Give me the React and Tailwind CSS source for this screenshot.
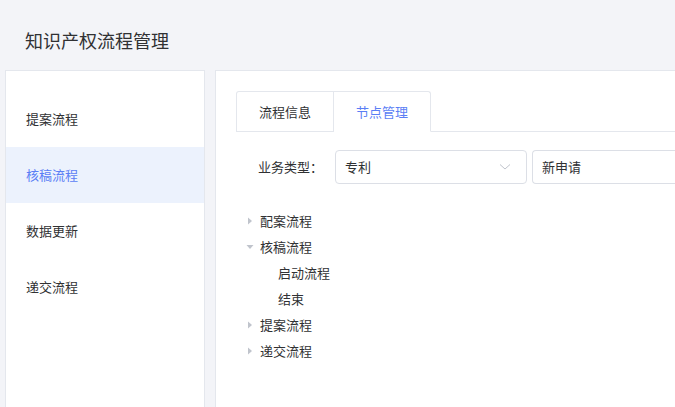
const font = { fontFamily: '"Microsoft YaHei", "Noto Sans CJK SC", sans-serif' };

const menu = ["提案流程", "核稿流程", "数据更新", "递交流程"];

const Caret = ({ open }) => (
  <svg width="8" height="8" viewBox="0 0 8 8" className="shrink-0">
    {open ? <path d="M0.5 2 L7.5 2 L4 6 Z" fill="#c0c4cc" /> : <path d="M2 0.5 L6 4 L2 7.5 Z" fill="#c0c4cc" />}
  </svg>
);

const TreeRow = ({ label, open, child }) => (
  <div className={`flex items-center h-[26px] ${child ? "pl-[42px]" : "pl-[10px]"}`}>
    {!child && <Caret open={open} />}
    <span className={child ? "" : "ml-[6px]"}>{label}</span>
  </div>
);

export default function App() {
  return (
    <div className="w-[675px] h-[407px] overflow-hidden bg-[#f3f4f8] text-[13px] text-[#303133]" style={font}>
      <div className="h-[70px] pl-[25px] pt-[28px] text-[18px] leading-[24px] text-[#303133]">知识产权流程管理</div>
      <div className="flex gap-[10px] pl-[5px]">
        <div className="w-[200px] h-[360px] shrink-0 bg-white border border-[#e4e7ed] pt-[20px]">
          {menu.map((m, i) => (
            <div key={m} className={`h-[56px] flex items-center pl-[20px] ${i === 1 ? "bg-[#ecf2fd] text-[#5b7ef5]" : ""}`}>
              {m}
            </div>
          ))}
        </div>
        <div className="flex-1 h-[360px] bg-white border border-[#e4e7ed] border-r-0 pt-[20px] pl-[20px]">
          <div className="flex border-b border-[#e4e7ed] h-[41px]">
            <div className="w-[98px] h-[41px] flex items-center justify-center border border-[#e4e7ed] border-b-0 rounded-tl-[3px]">流程信息</div>
            <div className="w-[97px] h-[41px] flex items-center justify-center border border-l-0 border-[#e4e7ed] border-b-white bg-white text-[#5b7ef5] rounded-tr-[3px]">节点管理</div>
          </div>
          <div className="flex items-center mt-[18px]">
            <div className="w-[99px] pl-[22px]">业务类型：</div>
            <div className="w-[192px] h-[34px] border border-[#dcdfe6] rounded-[4px] flex items-center justify-between pl-[9px] pr-[15px]">
              <span>专利</span>
              <svg width="12" height="8" viewBox="0 0 12 8"><path d="M1 1.5 L6 6 L11 1.5" fill="none" stroke="#c0c4cc" strokeWidth="1" /></svg>
            </div>
            <div className="ml-[5px] flex-1 h-[34px] border border-r-0 border-[#dcdfe6] rounded-l-[4px] flex items-center pl-[9px]">新申请</div>
          </div>
          <div className="mt-[24px]">
            <TreeRow label="配案流程" />
            <TreeRow label="核稿流程" open />
            <TreeRow label="启动流程" child />
            <TreeRow label="结束" child />
            <TreeRow label="提案流程" />
            <TreeRow label="递交流程" />
          </div>
        </div>
      </div>
    </div>
  );
}
